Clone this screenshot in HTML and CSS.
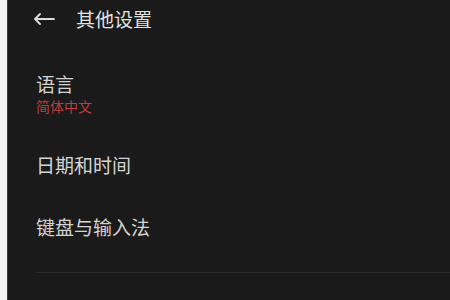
FILE: index.html
```html
<!DOCTYPE html>
<html lang="zh-CN">
<head>
<meta charset="utf-8">
<link rel="stylesheet" href="styles.css">
</head>
<body>
<div class="screen">
  <header class="topbar">
    <svg class="back" width="22" height="12" viewBox="0 0 22 12" fill="none" stroke="#dcdcdc" stroke-width="1.8" stroke-linecap="round" stroke-linejoin="round"><path d="M21 6H2M7 1L2 6l5 5"/></svg>
    <span class="title">其他设置</span>
  </header>
  <div class="item first">
    <div class="label">语言</div>
    <div class="sub">简体中文</div>
  </div>
  <div class="item">
    <div class="label">日期和时间</div>
  </div>
  <div class="item">
    <div class="label">键盘与输入法</div>
  </div>
  <div class="divider"></div>
</div>
</body>
</html>
```

FILE: styles.css
```css
html, body {
  margin: 0;
  padding: 0;
  background: #f4f4f4;
  height: 100%;
}
body {
  font-family: "Noto Sans CJK SC", "Noto Sans", sans-serif;
}
.screen {
  margin-left: 7px;
  border-left: 1px solid #3c3c3c;
  background: #1a1a1a;
  min-height: 300px;
  overflow: hidden;
}
.topbar {
  height: 38px;
  display: flex;
  align-items: center;
  padding-left: 25px;
}
.back {
  display: block;
  margin-right: 21px;
}
.title {
  font-size: 19px;
  line-height: 24px;
  color: #e2e2e2;
}
.item {
  padding: 19px 0 19px 28px;
}
.item.first {
  padding-top: 34px;
}
.label {
  font-size: 19px;
  line-height: 24px;
  color: #d4d4d4;
}
.sub {
  margin-top: 1px;
  font-size: 14px;
  line-height: 18px;
  color: #bf3a3e;
}
.divider {
  margin: 14px 0 0 28px;
  height: 1px;
  background: #2a2a2a;
}
```
